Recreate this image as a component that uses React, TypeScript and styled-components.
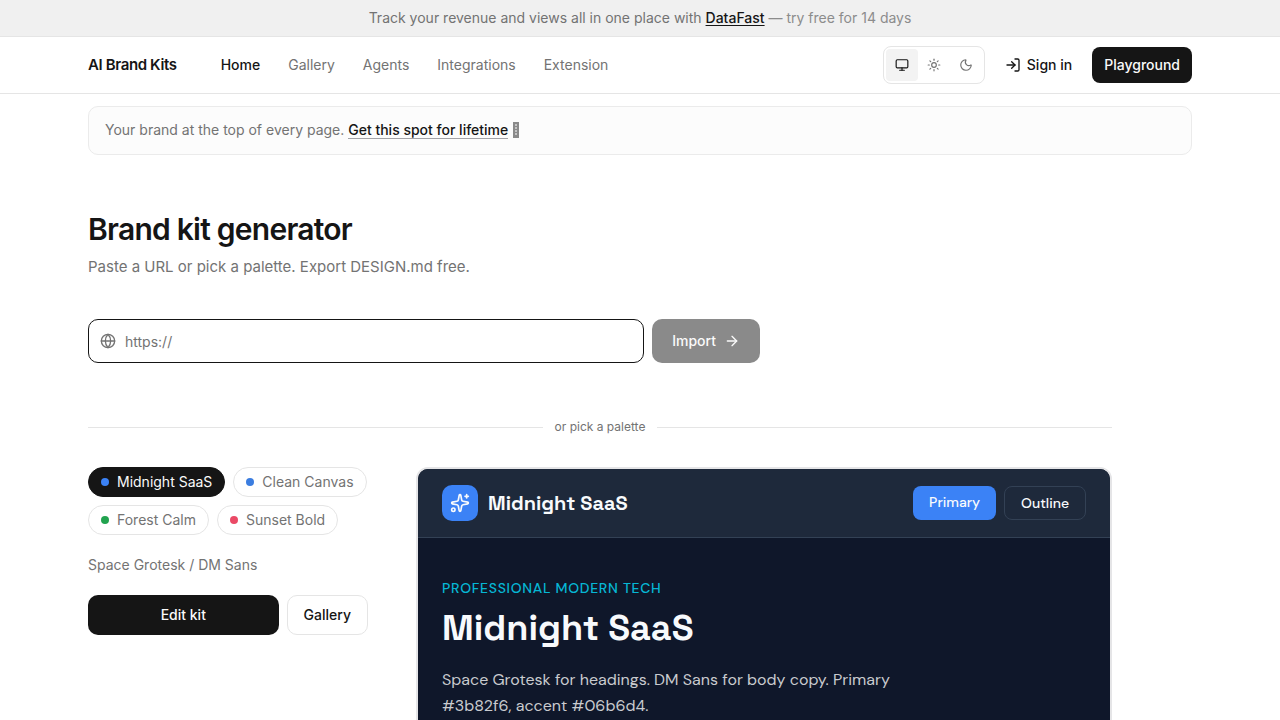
import React, { useState } from "react";
import styled, { createGlobalStyle } from "styled-components";
import { ArrowRight, Globe, LogIn, Monitor, Moon, Sparkles, Sun } from "lucide-react";

const ink = "#151515";
const muted = "#737373";
const line = "#e5e5e5";
const heading = `"Space Grotesk", Inter, sans-serif`;
const body = `"DM Sans", Inter, sans-serif`;

const GlobalStyle = createGlobalStyle`
  *, *::before, *::after { box-sizing: border-box; }
  body {
    margin: 0;
    background: #fff;
    color: ${ink};
    font-family: Inter, "Liberation Sans", sans-serif;
    font-size: 14px;
    line-height: 20px;
    overflow-x: hidden;
  }
  button, input { font: inherit; color: inherit; }
  button { cursor: pointer; }
  a { color: inherit; text-decoration: none; }
  h1, h2, p { margin: 0; }
`;

const Promo = styled.p`
  padding: 8px 16px;
  text-align: center;
  color: ${muted};
  background: #f0f0f0;
  border-bottom: 1px solid ${line};
`;
const PromoLink = styled.a`
  color: ${ink};
  font-weight: 500;
  text-decoration: underline;
  text-underline-offset: 2px;
`;
const Faded = styled.span`
  color: #8c8c8c;
`;

const Container = styled.div`
  max-width: 1152px;
  margin: 0 auto;
  padding: 0 24px;
`;
const Header = styled.header`
  border-bottom: 1px solid ${line};
`;
const HeaderRow = styled(Container)`
  display: flex;
  align-items: center;
  height: 56px;
`;
const Brand = styled.a`
  font-size: 15px;
  font-weight: 600;
  letter-spacing: -0.025em;
  margin-right: 44px;
`;
const Nav = styled.nav`
  display: flex;
  flex: 1;
  gap: 28px;
`;
const NavLink = styled.a<{ $active?: boolean }>`
  color: ${(p) => (p.$active ? ink : muted)};
  font-weight: ${(p) => (p.$active ? 500 : 400)};
`;
const ThemeSwitch = styled.div`
  display: flex;
  padding: 2px;
  margin-right: 8px;
  border: 1px solid ${line};
  border-radius: 8px;
`;
const ThemeButton = styled.button<{ $active: boolean }>`
  display: grid;
  place-items: center;
  width: 32px;
  height: 32px;
  padding: 0;
  border: 0;
  border-radius: 4px;
  color: ${(p) => (p.$active ? ink : muted)};
  background: ${(p) => (p.$active ? "#f3f3f3" : "transparent")};
`;
const SignIn = styled.a`
  display: flex;
  align-items: center;
  gap: 6px;
  padding: 8px 12px;
  margin-right: 8px;
  font-weight: 500;
`;

const Button = styled.a<{ $solid?: boolean; $grow?: boolean; $compact?: boolean }>`
  display: flex;
  align-items: center;
  justify-content: center;
  flex: ${(p) => (p.$grow ? 1 : "none")};
  height: ${(p) => (p.$compact ? 36 : 40)}px;
  padding: 0 ${(p) => (p.$compact ? 12 : 16)}px;
  border: ${(p) => (p.$solid ? "0" : `1px solid ${line}`)};
  border-radius: ${(p) => (p.$compact ? 8 : 10)}px;
  color: ${(p) => (p.$solid ? "#fafafa" : ink)};
  background: ${(p) => (p.$solid ? ink : "#fff")};
  font-weight: 500;
`;

const Sponsor = styled.p`
  margin-top: 12px;
  padding: 13px 16px 14px;
  border: 1px solid #ebebeb;
  border-radius: 10px;
  color: ${muted};
  background: #fcfcfc;
`;
const SponsorLink = styled.a`
  color: ${ink};
  font-weight: 500;
  border-bottom: 1px solid #a3a3a8;
`;
const MissingGlyph = styled.svg`
  vertical-align: -3px;
`;

const Main = styled.main`
  max-width: 1024px;
  padding-top: 56px;
`;
const Title = styled.h1`
  font-size: 30px;
  line-height: 36px;
  font-weight: 600;
  letter-spacing: -0.025em;
`;
const Lead = styled.p`
  margin-top: 8px;
  font-size: 15px;
  line-height: 24px;
  color: ${muted};
`;
const ImportForm = styled.form`
  display: flex;
  gap: 8px;
  max-width: 672px;
  margin-top: 40px;
`;
const UrlField = styled.label`
  display: flex;
  align-items: center;
  flex: 1;
  gap: 9px;
  height: 44px;
  padding: 0 11px;
  border: 1px solid ${ink};
  border-radius: 10px;
  color: ${muted};
`;
const UrlInput = styled.input`
  flex: 1;
  min-width: 0;
  padding: 2px 0 0;
  border: 0;
  outline: 0;
  background: transparent;
  color: ${ink};
  &::placeholder { color: ${muted}; opacity: 1; }
`;
const ImportButton = styled.button`
  display: flex;
  align-items: center;
  gap: 8px;
  height: 44px;
  padding: 0 20px;
  border: 0;
  border-radius: 10px;
  color: #fafafa;
  background: #8a8a8a;
  font-weight: 500;
`;
const Divider = styled.div`
  display: flex;
  align-items: center;
  gap: 12px;
  margin-top: 56px;
  font-size: 12px;
  line-height: 16px;
  color: ${muted};
  &::before, &::after {
    content: "";
    flex: 1;
    height: 1px;
    background: ${line};
  }
`;

const Picker = styled.div`
  display: grid;
  grid-template-columns: 280px minmax(0, 1fr);
  gap: 48px;
  align-items: start;
  margin-top: 32px;
`;
const Chips = styled.div`
  display: flex;
  flex-wrap: wrap;
  gap: 8px;
`;
const Chip = styled.button<{ $active: boolean }>`
  display: flex;
  align-items: center;
  gap: 8px;
  height: 30px;
  padding: 0 12px;
  border: 1px solid ${(p) => (p.$active ? ink : line)};
  border-radius: 15px;
  color: ${(p) => (p.$active ? "#fafafa" : muted)};
  background: ${(p) => (p.$active ? ink : "#fff")};
`;
const Dot = styled.span<{ $color: string }>`
  width: 8px;
  height: 8px;
  border-radius: 50%;
  background: ${(p) => p.$color};
`;
const Fonts = styled.p`
  margin-top: 20px;
  color: ${muted};
`;
const Actions = styled.div`
  display: flex;
  gap: 8px;
  margin-top: 20px;
`;

const Preview = styled.section`
  overflow: hidden;
  border: 2px solid #e5e5e7;
  border-radius: 12px;
  background: #0f172a;
  color: #f8fafc;
`;
const PreviewBar = styled.div`
  display: flex;
  align-items: center;
  height: 69px;
  padding: 0 24px;
  background: #1e293b;
  border-bottom: 1px solid #334155;
`;
const Logo = styled.span`
  display: grid;
  place-items: center;
  width: 36px;
  height: 36px;
  margin-right: 10px;
  border-radius: 10px;
  background: #3b82f6;
`;
const PreviewName = styled.strong`
  flex: 1;
  font: 600 20px/28px ${heading};
`;
const PreviewButton = styled.button<{ $filled?: boolean }>`
  height: 34px;
  padding: ${(p) => (p.$filled ? "6px 16px 8px" : "6px 16px")};
  margin-left: 8px;
  border: ${(p) => (p.$filled ? "0" : "1px solid #334155")};
  border-radius: 8px;
  background: ${(p) => (p.$filled ? "#3b82f6" : "transparent")};
  color: #f8fafc;
  font: 500 14px/20px ${body};
`;
const PreviewBody = styled.div`
  padding: 40px 24px;
  height: 320px;
`;
const Eyebrow = styled.p`
  font: 500 14px/20px ${body};
  letter-spacing: 0.05em;
  text-transform: uppercase;
  color: #06b6d4;
`;
const PreviewTitle = styled.h2`
  margin-top: 8px;
  font: 700 36px/45px ${heading};
`;
const PreviewText = styled.p`
  max-width: 512px;
  margin-top: 16px;
  font: 400 16px/26px ${body};
  color: #c9cbcf;
`;

const palettes = [
  { name: "Midnight SaaS", color: "#3b82f6" },
  { name: "Clean Canvas", color: "#3b7de0" },
  { name: "Forest Calm", color: "#22a34f" },
  { name: "Sunset Bold", color: "#ea4a66" },
];
const themes = [
  { name: "System theme", Icon: Monitor },
  { name: "Light theme", Icon: Sun },
  { name: "Dark theme", Icon: Moon },
];
const links = ["Home", "Gallery", "Agents", "Integrations", "Extension"];

export default function App() {
  const [theme, setTheme] = useState(0);
  const [palette, setPalette] = useState(0);
  return (
    <>
      <GlobalStyle />
      <Promo>
        Track your revenue and views all in one place with <PromoLink href="#">DataFast</PromoLink>{" "}
        <Faded>— try free for 14 days</Faded>
      </Promo>
      <Header>
        <HeaderRow>
          <Brand href="#">AI Brand Kits</Brand>
          <Nav>
            {links.map((l, i) => (
              <NavLink key={l} href="#" $active={i === 0}>{l}</NavLink>
            ))}
          </Nav>
          <ThemeSwitch>
            {themes.map(({ name, Icon }, i) => (
              <ThemeButton key={name} aria-label={name} $active={i === theme} onClick={() => setTheme(i)}>
                <Icon size={14} />
              </ThemeButton>
            ))}
          </ThemeSwitch>
          <SignIn href="#"><LogIn size={16} />Sign in</SignIn>
          <Button href="#" $solid $compact>Playground</Button>
        </HeaderRow>
      </Header>
      <Container>
        <Sponsor>
          Your brand at the top of every page. <SponsorLink href="#">Get this spot for lifetime</SponsorLink>{" "}
          <MissingGlyph width="8" height="16" viewBox="0 0 8 16" aria-hidden="true">
            <rect x="1" y="0" width="6" height="16" fill="#8a8a8a" />
            <path d="M4 2v12" stroke="#c4c4c4" strokeWidth="2" strokeDasharray="2 1" />
          </MissingGlyph>
        </Sponsor>
        <Main>
          <Title>Brand kit generator</Title>
          <Lead>Paste a URL or pick a palette. Export DESIGN.md free.</Lead>
          <ImportForm onSubmit={(e) => e.preventDefault()}>
            <UrlField>
              <Globe size={16} />
              <UrlInput type="url" aria-label="Website URL" placeholder="https://" />
            </UrlField>
            <ImportButton type="submit">Import<ArrowRight size={16} /></ImportButton>
          </ImportForm>
          <Divider>or pick a palette</Divider>
          <Picker>
            <div>
              <Chips>
                {palettes.map((p, i) => (
                  <Chip key={p.name} $active={i === palette} onClick={() => setPalette(i)}>
                    <Dot $color={p.color} />{p.name}
                  </Chip>
                ))}
              </Chips>
              <Fonts>Space Grotesk / DM Sans</Fonts>
              <Actions>
                <Button href="#" $solid $grow>Edit kit</Button>
                <Button href="#">Gallery</Button>
              </Actions>
            </div>
            <Preview>
              <PreviewBar>
                <Logo><Sparkles size={20} /></Logo>
                <PreviewName>Midnight SaaS</PreviewName>
                <PreviewButton $filled>Primary</PreviewButton>
                <PreviewButton>Outline</PreviewButton>
              </PreviewBar>
              <PreviewBody>
                <Eyebrow>Professional modern tech</Eyebrow>
                <PreviewTitle>Midnight SaaS</PreviewTitle>
                <PreviewText>
                  Space Grotesk for headings. DM Sans for body copy. Primary #3b82f6, accent #06b6d4.
                </PreviewText>
              </PreviewBody>
            </Preview>
          </Picker>
        </Main>
      </Container>
    </>
  );
}
